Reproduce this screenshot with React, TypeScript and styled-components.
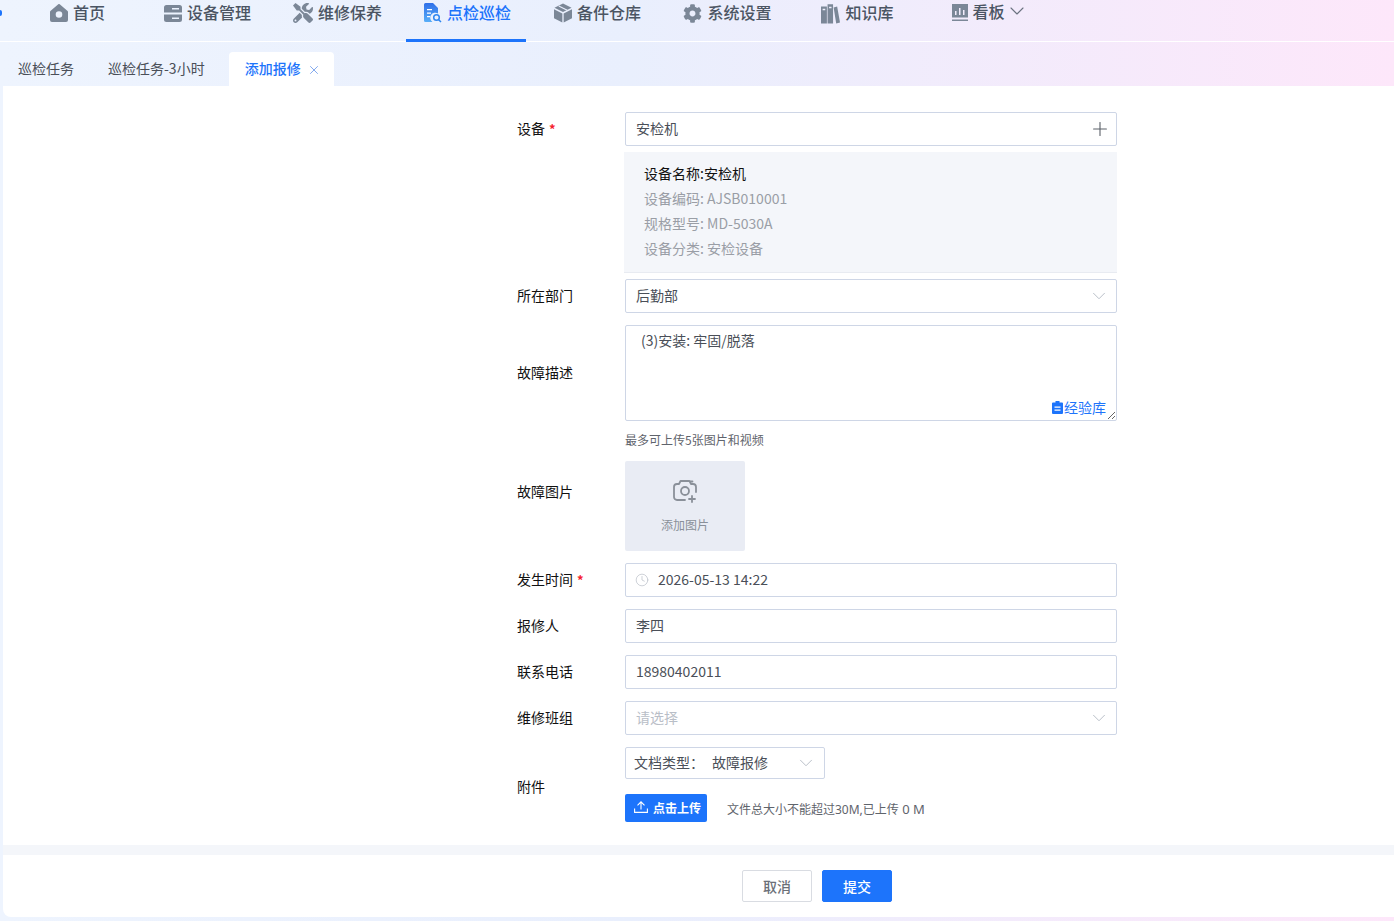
import React from "react";
import styled, { createGlobalStyle } from "styled-components";
import { FaTools, FaCog } from "react-icons/fa";
import { ChevronDown, Plus, X, Clock } from "lucide-react";

const Global = createGlobalStyle`
  html, body { margin: 0; padding: 0; height: 100%; overflow: hidden; }
  body {
    font-family: "Noto Sans CJK SC", "Noto Sans", sans-serif;
    font-size: 14px;
    color: #333;
    background: linear-gradient(90deg, #eef4fe 0%, #e9effd 45%, #fde7fa 100%);
  }
  * { box-sizing: border-box; }
`;

const Page = styled.div`
  width: 1394px;
  height: 921px;
  display: flex;
  flex-direction: column;
  overflow: hidden;
  position: relative;
`;

const LogoSliver = styled.div`
  position: absolute;
  left: 0;
  top: 10px;
  width: 2px;
  height: 6px;
  border-radius: 0 3px 3px 0;
  background: #1d74fb;
`;

const Nav = styled.nav`
  height: 42px;
  flex: none;
  display: flex;
  gap: 10px;
  padding-left: 16px;
  border-bottom: 1px solid #fff;
`;

const NavItem = styled.div<{ $active?: boolean; $raised?: boolean }>`
  width: 120px;
  height: 42px;
  display: flex;
  align-items: flex-start;
  justify-content: center;
  gap: 5px;
  padding-left: 3px;
  font-size: 16px;
  line-height: 24px;
  font-weight: 500;
  color: ${(p) => (p.$active ? "#1d74fb" : "#4b5563")};
  border-bottom: ${(p) => (p.$active ? "3px solid #1d74fb" : "none")};
  margin-top: ${(p) => (p.$raised ? "-1px" : "0")};
  svg { flex: none; }
`;

const NavIcon = styled.span`
  display: flex;
  height: 24px;
  margin-top: 1px;
  align-items: center;
  color: #7b8797;
`;

const NavCaret = styled(ChevronDown)`
  color: #6b7280;
  margin: 0 -6px 0 -5px;
`;

const TabBar = styled.div`
  height: 44px;
  flex: none;
  display: flex;
  align-items: flex-end;
  padding-left: 1px;
`;

const Tab = styled.div<{ $active?: boolean }>`
  height: 34px;
  padding: ${(p) => (p.$active ? "0 13px 2px 16px" : "0 17px 2px")};
  display: flex;
  align-items: center;
  gap: 6px;
  font-size: 14px;
  color: ${(p) => (p.$active ? "#1d74fb" : "#4a4f58")};
  background: ${(p) => (p.$active ? "#fff" : "transparent")};
  border-radius: 4px 4px 0 0;
  font-weight: ${(p) => (p.$active ? 500 : 400)};
  margin-left: ${(p) => (p.$active ? "7px" : "0")};
  svg { color: #5c8fe8; margin-top: 3px; }
`;

const Main = styled.main`
  flex: none;
  margin-left: 3px;
  height: 759px;
  background: #fff;
  padding: 26px 0 0 514px;
`;

const Row = styled.div<{ $top?: number }>`
  display: flex;
  align-items: center;
  width: 600px;
  margin-top: ${(p) => p.$top ?? 12}px;
`;

const Label = styled.label<{ $shift?: number }>`
  width: 108px;
  flex: none;
  color: #111;
  font-size: 14px;
  line-height: 20px;
  font-weight: 400;
  padding-bottom: 2px;
  margin-top: ${(p) => (p.$shift && p.$shift > 0 ? p.$shift * 2 : 0)}px;
  margin-bottom: ${(p) => (p.$shift && p.$shift < 0 ? -p.$shift * 2 : 0)}px;
`;

const Req = styled.span`
  color: #f5222d;
  margin-left: 4px;
  font-size: 13px;
  font-weight: 700;
`;

const Control = styled.div`
  width: 492px;
  flex: none;
`;

const FieldBox = styled.div`
  position: relative;
  height: 34px;
  display: flex;
  align-items: center;
  border: 1px solid #ced6e6;
  border-radius: 2px;
  background: #fff;
  padding: 0 10px 2px;
  color: #4a4f58;
  svg { margin-top: 2px; }
`;

const Input = styled.input`
  width: 100%;
  height: 34px;
  display: block;
  border: 1px solid #ced6e6;
  border-radius: 2px;
  padding: 0 10px 2px;
  font: inherit;
  color: #4a4f58;
  background: #fff;
  outline: none;
  &::placeholder { color: #b9bec7; }
`;

const FieldText = styled.span<{ $muted?: boolean }>`
  flex: 1;
  line-height: 20px;
  color: ${(p) => (p.$muted ? "#b9bec7" : "#4a4f58")};
`;

const Caret = styled(ChevronDown)`
  color: #b4bac4;
  margin-right: -4px;
`;

const PlusIcon = styled(Plus)`
  color: #5a6068;
  margin-right: -5px;
`;

const InfoRow = styled.div`
  display: flex;
  width: 600px;
  margin-top: 6px;
  padding-left: 107px;
`;

const InfoCard = styled.div`
  width: 493px;
  height: 121px;
  background: #f4f6fa;
  border-bottom: 1px solid #e8ebf1;
  padding: 9px 20px 0;
`;

const InfoLine = styled.div<{ $strong?: boolean }>`
  height: 25px;
  line-height: 25px;
  color: ${(p) => (p.$strong ? "#111" : "#9a9ea6")};
  font-weight: 400;
`;

const TextAreaWrap = styled.div`
  position: relative;
  height: 96px;
`;

const TextArea = styled.textarea`
  width: 100%;
  height: 96px;
  display: block;
  border: 1px solid #ced6e6;
  border-radius: 2px;
  padding: 3px 15px;
  font: inherit;
  line-height: 22px;
  color: #4a4f58;
  outline: none;
  resize: vertical;
`;

const LibLink = styled.span`
  position: absolute;
  right: 11px;
  bottom: 4px;
  display: flex;
  align-items: center;
  gap: 1px;
  color: #1d74fb;
  font-size: 14px;
  line-height: 20px;
`;

const Hint = styled.div`
  width: 600px;
  padding-left: 108px;
  margin-top: 9px;
  height: 20px;
  line-height: 20px;
  font-size: 12px;
  color: #5f646c;
`;

const UploadTile = styled.div`
  width: 120px;
  height: 90px;
  background: #e9ecf4;
  border-radius: 2px;
  display: flex;
  flex-direction: column;
  align-items: center;
  padding-top: 17px;
  color: #8a9099;
  font-size: 12px;
`;

const TileText = styled.span`
  margin-top: 12px;
  line-height: 18px;
`;

const TimeIcon = styled(Clock)`
  color: #b9bec7;
  margin-right: 9px;
  margin-left: -1px;
`;

const DocSelect = styled.div`
  width: 200px;
  height: 32px;
  display: flex;
  align-items: center;
  border: 1px solid #ced6e6;
  border-radius: 2px;
  padding: 0 11px 2px 8px;
  color: #4a4f58;
  svg { margin-top: 2px; }
`;

const DocLabel = styled.span`
  width: 78px;
  flex: none;
  line-height: 20px;
`;

const UploadLine = styled.div`
  display: flex;
  align-items: center;
  margin-top: 15px;
`;

const UploadButton = styled.button`
  width: 82px;
  height: 28px;
  border: none;
  border-radius: 2px;
  background: #1d74fb;
  color: #fff;
  font: inherit;
  font-size: 12px;
  font-weight: 700;
  padding: 0 0 2px 3px;
  display: flex;
  align-items: center;
  justify-content: center;
  gap: 5px;
`;

const UploadNote = styled.span`
  margin-left: 20px;
  margin-top: 1px;
  font-family: "Noto Sans", "Noto Sans CJK SC", sans-serif;
  font-size: 12px;
  color: #5f646c;
`;

const NoteSize = styled.span`
  font-size: 13px;
`;

const Divider = styled.div`
  height: 10px;
  flex: none;
  margin-left: 3px;
  background: #f4f6fa;
`;

const Footer = styled.footer`
  flex: none;
  margin-left: 3px;
  height: 62px;
  background: #fff;
  border-radius: 0 0 0 8px;
  display: flex;
  align-items: flex-start;
  justify-content: center;
  gap: 10px;
  padding: 15px 0 0 237px;
`;

const FootButton = styled.button<{ $primary?: boolean }>`
  width: 70px;
  height: 32px;
  border-radius: 2px;
  border: 1px solid ${(p) => (p.$primary ? "#1d74fb" : "#d9dce2")};
  background: ${(p) => (p.$primary ? "#1d74fb" : "#fff")};
  color: ${(p) => (p.$primary ? "#fff" : "#6b7078")};
  font: inherit;
  font-weight: 500;
  padding: 0;
`;

const BoardSvg = styled.svg`
  margin-right: -1px;
`;

const HomeIcon = () => (
  <svg width="18" height="18" viewBox="0 0 18 18">
    <path fill="#7b8797" fillRule="evenodd" d="M8 .4a1.500 1.500 0 0 1 2 0l7.300 6.300a1.500 1.500 0 0 1 .7 1.200V16a2 2 0 0 1-2 2H2a2 2 0 0 1-2-2V7.900a1.500 1.500 0 0 1 .7-1.200zM9 7.200a3.300 3.300 0 1 0 0 6.600 3.300 3.300 0 0 0 0-6.600z" />
  </svg>
);
const ServerIcon = () => (
  <svg width="18" height="17" viewBox="0 0 18 17">
    <path fill="#7b8797" fillRule="evenodd" d="M2.500 0h13A2.500 2.500 0 0 1 18 2.500V7.500H0V2.500A2.500 2.500 0 0 1 2.500 0zM8 3v1.500h7V3zM0 9.500h18v5a2.500 2.500 0 0 1-2.500 2.500h-13A2.500 2.500 0 0 1 0 14.500zm8 3v1.500h7v-1.500z" />
  </svg>
);
const InspectIcon = () => (
  <svg width="18" height="20" viewBox="0 0 18 20">
    <defs>
      <linearGradient id="insp" x1="0" y1="0" x2="0" y2="1">
        <stop offset="0" stopColor="#2f6fe8" />
        <stop offset="1" stopColor="#58aef8" />
      </linearGradient>
    </defs>
    <path fill="url(#insp)" d="M1.500 0H9l5 5v5.500a5 5 0 0 0-5.500 8.500H1.500A1.500 1.500 0 0 1 0 17.500v-16A1.500 1.500 0 0 1 1.500 0z" />
    <path fill="#fff" d="M3 6h5v1.300H3zM3 9.500h4v1.300H3zM3 13h3v1.300H3z" />
    <circle cx="12.500" cy="14.500" r="2.800" fill="none" stroke="#2f86f0" strokeWidth="1.500" />
    <path stroke="#2f86f0" strokeWidth="1.500" d="M14.500 16.500 17 19" />
  </svg>
);
const BoxIcon = () => (
  <svg width="18" height="20" viewBox="0 0 19 20">
    <path fill="#7b8797" d="M9.500 0 18.500 4.500 9.500 9 .5 4.500zM0 6l8.800 4.400V20L0 15.500zM19 6l-8.800 4.400V20l8.800-4.500z" />
    <path stroke="#e9effd" strokeWidth="1.200" d="M5 2.500l9 4.500" />
  </svg>
);
const BooksIcon = () => (
  <svg width="19" height="21" viewBox="0 0 20 21">
    <path fill="#7b8797" fillRule="evenodd" d="M0 3h6.200v18H0zM1.700 5.500V7h2.800V5.500zM6.900 .8h5.800V21H6.900zM8.500 3.500V5h2.600V3.500zM13.300 4.200 17 3l3 17-4 1z" />
  </svg>
);
const BoardIcon = () => (
  <BoardSvg width="16" height="17" viewBox="0 0 16 17">
    <path fill="#7b8797" fillRule="evenodd" d="M0 0h16v13.500H0zM3 7v4h1.500V7zM7 4v7h1.500V4zM11 6v5h1.500V6zM0 15.500h16V17H0z" />
  </BoardSvg>
);
const CameraPlus = () => (
  <svg width="26" height="26" viewBox="0 0 26 26" fill="none" stroke="#8a9099" strokeWidth="1.800" strokeLinecap="round" strokeLinejoin="round">
    <path d="M13 22H5a3 3 0 0 1-3-3V9a3 3 0 0 1 3-3h2l1.500-3h9L19 6h2a3 3 0 0 1 3 3v5" />
    <circle cx="13" cy="13" r="4" />
    <path d="M20 18v6M17 21h6" />
    <path d="M18.500 3.500h2" />
  </svg>
);
const ClipIcon = () => (
  <svg width="11" height="13" viewBox="0 0 11 13">
    <path fill="#1d74fb" fillRule="evenodd" d="M3.500 0h4v1.500H10A1 1 0 0 1 11 2.500V12a1 1 0 0 1-1 1H1a1 1 0 0 1-1-1V2.500a1 1 0 0 1 1-1h2.500zM2.500 5.500v1.200h6V5.500zM2.500 8.500v1.200h6V8.500z" />
  </svg>
);
const UploadGlyph = () => (
  <svg width="14" height="12" viewBox="0 0 14 12" fill="none" stroke="#fff" strokeWidth="1.100">
    <path d="M.6 7.500v3.900h12.800V7.500" />
    <path d="M7 8.500V1M3.500 4.300 7 .8l3.500 3.500" />
  </svg>
);

const navItems: { label: string; icon: React.ReactNode; active?: boolean; caret?: boolean }[] = [
  { label: "首页", icon: <HomeIcon /> },
  { label: "设备管理", icon: <ServerIcon /> },
  { label: "维修保养", icon: <FaTools size={20} /> },
  { label: "点检巡检", icon: <InspectIcon />, active: true },
  { label: "备件仓库", icon: <BoxIcon /> },
  { label: "系统设置", icon: <FaCog size={19} /> },
  { label: "知识库", icon: <BooksIcon /> },
  { label: "看板", icon: <BoardIcon />, caret: true },
];

export default function App() {
  return (
    <Page>
      <Global />
      <LogoSliver />
      <Nav>
        {navItems.map((n) => (
          <NavItem key={n.label} $active={n.active} $raised={n.caret}>
            <NavIcon>{n.icon}</NavIcon>
            {n.label}
            {n.caret && <NavCaret size={24} strokeWidth={1.1} />}
          </NavItem>
        ))}
      </Nav>
      <TabBar>
        <Tab>巡检任务</Tab>
        <Tab>巡检任务-3小时</Tab>
        <Tab $active>
          添加报修
          <X size={14} strokeWidth={1.3} />
        </Tab>
      </TabBar>
      <Main>
        <Row $top={0}>
          <Label>设备<Req>*</Req></Label>
          <Control>
            <FieldBox>
              <FieldText>安检机</FieldText>
              <PlusIcon size={22} strokeWidth={1.2} />
            </FieldBox>
          </Control>
        </Row>
        <InfoRow>
          <InfoCard>
            <InfoLine $strong>设备名称:安检机</InfoLine>
            <InfoLine>设备编码: AJSB010001</InfoLine>
            <InfoLine>规格型号: MD-5030A</InfoLine>
            <InfoLine>设备分类: 安检设备</InfoLine>
          </InfoCard>
        </InfoRow>
        <Row $top={6}>
          <Label>所在部门</Label>
          <Control>
            <FieldBox>
              <FieldText>后勤部</FieldText>
              <Caret size={22} strokeWidth={1} />
            </FieldBox>
          </Control>
        </Row>
        <Row>
          <Label>故障描述</Label>
          <Control>
            <TextAreaWrap>
              <TextArea defaultValue="(3)安装: 牢固/脱落" />
              <LibLink><ClipIcon />经验库</LibLink>
            </TextAreaWrap>
          </Control>
        </Row>
        <Hint>最多可上传5张图片和视频</Hint>
        <Row $top={11}>
          <Label $shift={-14}>故障图片</Label>
          <UploadTile>
            <CameraPlus />
            <TileText>添加图片</TileText>
          </UploadTile>
        </Row>
        <Row>
          <Label>发生时间<Req>*</Req></Label>
          <Control>
            <FieldBox>
              <TimeIcon size={14} strokeWidth={1.2} />
              <FieldText>2026-05-13 14:22</FieldText>
            </FieldBox>
          </Control>
        </Row>
        <Row>
          <Label>报修人</Label>
          <Control><Input defaultValue="李四" /></Control>
        </Row>
        <Row>
          <Label>联系电话</Label>
          <Control><Input defaultValue="18980402011" /></Control>
        </Row>
        <Row>
          <Label>维修班组</Label>
          <Control>
            <FieldBox>
              <FieldText $muted>请选择</FieldText>
              <Caret size={22} strokeWidth={1} />
            </FieldBox>
          </Control>
        </Row>
        <Row>
          <Label $shift={2}>附件</Label>
          <Control>
            <DocSelect>
              <DocLabel>文档类型：</DocLabel>
              <FieldText>故障报修</FieldText>
              <Caret size={22} strokeWidth={1} />
            </DocSelect>
            <UploadLine>
              <UploadButton><UploadGlyph />点击上传</UploadButton>
              <UploadNote>文件总大小不能超过30M,已上传<NoteSize> 0 M</NoteSize></UploadNote>
            </UploadLine>
          </Control>
        </Row>
      </Main>
      <Divider />
      <Footer>
        <FootButton>取消</FootButton>
        <FootButton $primary>提交</FootButton>
      </Footer>
    </Page>
  );
}
